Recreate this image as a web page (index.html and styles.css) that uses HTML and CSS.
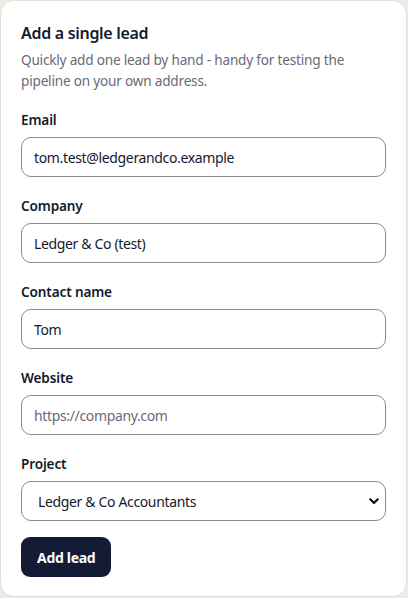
FILE: index.html
```html
<!DOCTYPE html>
<html lang="en">
<head>
<meta charset="utf-8">
<title>Add a single lead</title>
<link rel="stylesheet" href="styles.css">
</head>
<body>
<form class="card">
  <h2 class="title">Add a single lead</h2>
  <p class="desc">Quickly add one lead by hand - handy for testing the pipeline on your own address.</p>
  <div class="fields">
    <label class="field">
      <span class="label">Email</span>
      <input class="input" type="email" value="tom.test@ledgerandco.example">
    </label>
    <label class="field">
      <span class="label">Company</span>
      <input class="input" type="text" value="Ledger &amp; Co (test)">
    </label>
    <label class="field">
      <span class="label">Contact name</span>
      <input class="input" type="text" value="Tom">
    </label>
    <label class="field">
      <span class="label">Website</span>
      <input class="input" type="text" placeholder="https://company.com">
    </label>
    <label class="field">
      <span class="label">Project</span>
      <span class="select-wrap">
        <select class="input select">
          <option>Ledger &amp; Co Accountants</option>
        </select>
        <svg class="chev" viewBox="0 0 10 7" width="10" height="7" aria-hidden="true"><path d="M1.3 1.3 5 5 8.7 1.3" fill="none" stroke="#111" stroke-width="2.2" stroke-linecap="round" stroke-linejoin="round"/></svg>
      </span>
    </label>
    <div class="actions">
      <button class="btn" type="button">Add lead</button>
    </div>
  </div>
</form>
</body>
</html>
```
FILE: styles.css
```css
* { box-sizing: border-box; }
html, body { margin: 0; padding: 0; }
body {
  background: #eeebe5;
  font-family: "Noto Sans", "Liberation Sans", sans-serif;
  color: #141a2e;
  width: 408px;
  height: 598px;
}
.card {
  width: 407px;
  height: 597px;
  background: #fff;
  border: 1px solid #e2dfd8;
  border-radius: 14px;
  padding: 20px 20px;
  display: flex;
  flex-direction: column;
}
.title {
  margin: 0;
  font-size: 16px;
  line-height: 24px;
  font-weight: 600;
  letter-spacing: -0.3px;
  color: #141a2e;
}
.desc {
  margin: 4px 0 0;
  font-size: 13.6px;
  line-height: 21px;
  letter-spacing: -0.2px;
  color: #6b6a78;
}
.fields {
  margin-top: 19px;
  display: flex;
  flex-direction: column;
  gap: 19px;
}
.field {
  display: flex;
  flex-direction: column;
  gap: 7px;
}
.label {
  font-size: 13.6px;
  line-height: 20px;
  font-weight: 600;
  letter-spacing: -0.15px;
  color: #141a2e;
}
.input {
  width: 365px;
  height: 40px;
  border: 1px solid #8a8a97;
  border-radius: 10px;
  padding: 0 12px;
  font-family: inherit;
  font-size: 14px;
  letter-spacing: -0.35px;
  color: #141a2e;
  background: #fff;
  outline: none;
}
.input::placeholder { color: #6b6a78; }
.select-wrap {
  position: relative;
  display: block;
  width: 365px;
}
.select {
  appearance: none;
  -webkit-appearance: none;
  padding-left: 16px;
}
.chev {
  position: absolute;
  right: 7px;
  top: 17px;
  pointer-events: none;
}
.actions { display: flex; margin-top: -3px; }
.btn {
  height: 40px;
  padding: 0 16px;
  border: 0;
  border-radius: 9px;
  background: #141b35;
  color: #fff;
  font-family: inherit;
  font-size: 14px;
  font-weight: 700;
  letter-spacing: -0.3px;
}
```
